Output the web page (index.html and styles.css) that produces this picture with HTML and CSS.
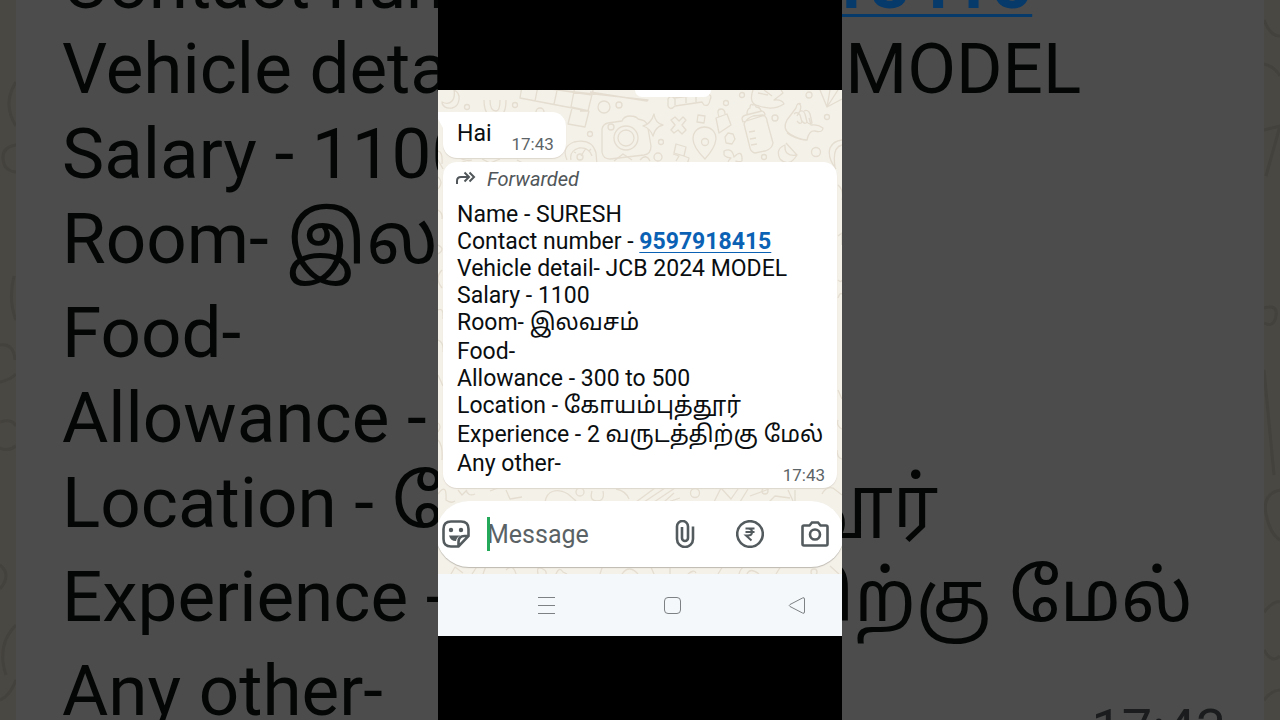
FILE: index.html
```html
<!DOCTYPE html>
<html lang="en">
<head>
<meta charset="utf-8">
<meta name="viewport" content="width=device-width, initial-scale=1">
<title>Chat</title>
<link rel="stylesheet" href="styles.css">
</head>
<body>
<div class="stage">
  <div class="backdrop" aria-hidden="true">
    <svg class="backdrop-doodles" viewBox="0 0 1280 720" preserveAspectRatio="none">
      <path d="M16 82q-14 22 0 44M16 145q-14 2-13 14t13 13M14 276q-6 24 2 44M0 345q14-2 15 15M0 382q10-2 16-8M0 422q12-4 16 4M0 448q8 4 16-2M0 565q12 10 0 24M16 625q-20 20-10 50M0 700q10-4 16-20"/>
      <path d="M1264 20q6 16 16 16M1264 64q10 2 16 12M1264 130l16-4-14 50M1264 308q14-4 12 8t-12 7M1264 370l10 105M1280 490q-18 4-14 24t14 26M1264 612q10-12 16-10M1264 650q8 14 16 6M1264 700q8-10 16-10"/>
    </svg>
    <div class="backdrop-bubble">
      <p class="line">Contact number - <span class="backdrop-link">9597918415</span></p>
      <p class="line">Vehicle detail- JCB 2024 MODEL</p>
      <p class="line">Salary - 1100</p>
      <p class="line tamil">Room- இலவசம்</p>
      <p class="line">Food-</p>
      <p class="line">Allowance - 300 to 500</p>
      <p class="line tamil">Location - கோயம்புத்தூர்</p>
      <p class="line tamil">Experience - 2 வருடத்திற்கு மேல்</p>
      <div class="last-row"><p class="line">Any other-</p><span class="backdrop-time">17:43</span></div>
    </div>
  </div>

  <div class="phone">
    <main class="chat">
      <svg class="doodles" viewBox="0 0 404 484" preserveAspectRatio="xMidYMin slice" aria-hidden="true">
        <path d="M4 12c8 4 14-2 12-12 8 4 6 16-2 18-6 1-10-2-10-6zM46 10c0 14 6 18 12 17 8-1 10-7 10-17M52 10c0 8 2 11 6 11 3 0 4-4 4-11"/>
        <circle cx="29" cy="17" r="2.500"/><circle cx="77" cy="15" r="2.500"/><circle cx="102" cy="22" r="4"/>
        <path d="M84 -4l-2 12 68 13M84 -4l126 14-1 1-57-9M100 -4l-3 15M120 -4l-4 18M137 -4l-4 21M156 -4l-6 25M150 21l-8 0M134 18l-4 16 17 3 4-16M133 17l18 4M120 0l34 5"/>
        <circle cx="166" cy="17" r="6"/><circle cx="181" cy="15" r="3"/><circle cx="152" cy="44" r="2.500"/>
        <path d="M164 39q1-5 6-6l14-2q2-5 8-5t8 3l4 1q5 1 6 8l3 18q0 8-7 9l-34 4q-7 0-8-7z"/>
        <circle cx="188" cy="48" r="12"/><circle cx="188" cy="48" r="8"/><circle cx="173" cy="37" r="3"/>
        <path class="covering" d="M216 24q1 9 9 11-8 2-10 11-3-8-10-10 8-2 11-12z"/>
        <path d="M230 9q2-4 6-1l26-3q-1-5 4-5l2 4q7 0 4 6-1 7-6 5l-2-3-27 4q-5 5-7 0zM237 8v7M248 6v7M258 5v7"/>
        <path d="M233 30l4-3 4 4 4-4 3 3-4 5 4 5-4 4-4-4-4 3-3-3 4-5zM260 25l7 1-1 7-7-1z"/>
        <path d="M278 28l11-4 4 11-12 8zM281 27q-3-8 2-8 4 0 4 5"/>
        <path d="M267 69q-12-12-12-20c0-16 23-16 23 0q-1 9-11 20z"/><circle cx="267" cy="52" r="3.500"/>
        <circle cx="223" cy="52" r="2.500"/><circle cx="220" cy="67" r="4"/><circle cx="288" cy="13" r="2.500"/><circle cx="304" cy="5" r="2.500"/>
        <path d="M238 54l10 3-2 9-10-3zM235 64l6 2-3 5M246 66l5 2-2 7"/>
        <path d="M290 43l5 1 2 5-3 5-6-1-1-6zM286 61q8-4 10 6 8-8 8 2 1 4-6 2 2 8-5 5-6-3 0-8-8-1-7-5z"/>
        <path d="M306 34q3-6 9-8l10-1q4 2 4 6l6 22q-1 6-8 8l-10 2q-4-1-5-5zM304 29q0-3 4-4l16-4q3 1 3 4l-22 7zM309 24q0-5 3-6 0-5 3-3 2-1 3 2 4 0 5 4M311 42l6-1M312 49l6-1M313 55l6-1"/>
        <path d="M315 0q-5 14 6 16 14 5 25-2-2-5-10-4l9-7-2-3M320 3l10 2M326 0l8 6"/>
        <path d="M363 14q-4-2-5 4l-9 12q-5 9 3 14 8 5 17 6 2-10 8-9 8 2 8-3-5-4-12-3l-2-7M361 14q3 1 1 7l-3 5M356 24q3-3 6 1l2 7q-2 3-5-1M361 22q4-3 6 2l2 8q-2 3-5-1M366 21q4-2 6 3l2 9q-3 2-5-1M349 43q8 6 18 7"/>
        <circle cx="337" cy="28" r="3"/><circle cx="389" cy="27" r="2.500"/><circle cx="371" cy="5" r="3"/><circle cx="378" cy="62" r="4.500"/><circle cx="326" cy="67" r="2.500"/>
        <path d="M348 53q10 11 11 12-8 13-17 4-5-10 5-14-1 12 12 10M382 0l7 17 15-8M389 17l3-17M389 17l11-17M398 79q-9-12-6-21 3-7 12-8M404 55q-10 2-7 22M129 70q-6-13 7-18 18-4 22 11l1 12M133 70q-2-9 8-12 10-1 13 8M143 66l5-8M136 62l2 1M151 61l2-2"/>
        <circle cx="142" cy="67" r="3"/><circle cx="26" cy="75" r="3"/><path d="M0 61q5 1 4 13M0 70l5 9M18 66q10 6 16 4M44 69l8 4 10-4M79 70q8 5 12 3M176 71l9-7 9 6M202 70q6-7 10 1"/>
        <path d="M0 87q6 5 0 12M0 120q5 3 4 9M0 155q8 4 0 9M4 180q-8 8 0 18M0 220q6-3 5 9M0 250q6 2 5 12M0 285l5 11M0 333q4 3 0 9M0 350q5 5 4 20"/>
        <path d="M400 95q6 5 4 15M400 146l4-3v12M400 190q3 3 4 0M400 208q2-6 4-4M400 300l4 9M400 330q-2 6 4 9M399 360q0 8 5 9"/>
        <path d="M0 404q9-12 8 6 5 4 9 1M20 400l4 5 5-5M28 400q2 7 9 4M52 401l8-3M68 400l4 9 12-2M107 412c2-12 12-14 23-8l8 7M154 401q-3 10 5 10t6-10M178 399q10 2 13 10M198 412l19-14M206 412l21-14M216 412l21-14M226 412l10-9M230 412l12-4"/>
        <circle cx="142" cy="402" r="4"/><circle cx="257" cy="403" r="4.500"/><circle cx="327" cy="401" r="3"/>
        <path d="M276 412l7-14 10 11 7-10M302 412l8-13M312 406l19-7M331 412l6-6 15 2M350 400l5 11M357 400v11M384 404q4-8 11-6l9 7"/>
        <path d="M13 484l4-7 8 6M34 484l8-12M45 484l3-8M68 480q7-7 10 4M100 484q-2-9 5-5 4 2 3 5M118 484q3-8 7-2l4 2M150 475h15l-3 9M184 484q7-10 16 0M216 484l-4-9M232 476v8M250 484q6-5 8-1M280 484l5-8M301 484q3-10 10-8l9 1M309 484q3-7 12 0M338 484l5-8M392 476l9 8"/><circle cx="376" cy="482" r="3"/>
      </svg>
      <div class="date-chip"></div>
      <section class="messages" aria-label="Messages">
        <article class="bubble short">
          <svg class="tail" viewBox="0 0 14 18" aria-hidden="true"><path d="M14 0H3Q-1 0 1 3L9 18h5z"/></svg>
          <p class="line">Hai</p>
          <time class="time">17:43</time>
        </article>
        <article class="bubble long">
          <p class="forwarded">
            <svg class="forward-icon" viewBox="0 0 20 16" aria-hidden="true"><path d="M1 13V10Q1 6 5 6H12M8.500 1.500L13 6l-4.500 4.500M13.500 1.500L18 6l-4.500 4.500"/></svg>
            <span>Forwarded</span>
          </p>
          <p class="line">Name - SURESH</p>
          <p class="line">Contact number - <a class="phone-link" href="tel:9597918415">9597918415</a></p>
          <p class="line">Vehicle detail- JCB 2024 MODEL</p>
          <p class="line">Salary - 1100</p>
          <p class="line tamil">Room- இலவசம்</p>
          <p class="line">Food-</p>
          <p class="line">Allowance - 300 to 500</p>
          <p class="line tamil">Location - கோயம்புத்தூர்</p>
          <p class="line tamil">Experience - 2 வருடத்திற்கு மேல்</p>
          <div class="last-row"><p class="line">Any other-</p><time class="time">17:43</time></div>
        </article>
      </section>
      <form class="composer">
        <button class="icon-button" type="button" aria-label="Stickers">
          <svg class="icon" viewBox="0 0 28 28"><path d="M9 1.500h10q7.500 0 7.500 7.500v7L16.500 26.500H9Q1.500 26.500 1.500 19V9Q1.500 1.500 9 1.500zM16.500 26.500V22q0-6 6-6h4"/><path class="solid" d="M7 15.500h11.500q-4 1.500-4.500 5.500-5.500 0-7-5.500z"/><circle class="solid" cx="9" cy="10" r="2.200"/><circle class="solid" cx="19" cy="10" r="2.200"/></svg>
        </button>
        <div class="field">
          <span class="caret"></span>
          <input class="message-input" type="text" placeholder="Message" aria-label="Message">
        </div>
        <button class="icon-button" type="button" aria-label="Attach">
          <svg class="icon" viewBox="0 0 28 28"><path d="M22 6.500V19a8 8 0 0 1-16 0V6.500a5.500 5.500 0 0 1 11 0V18a3 3 0 0 1-6 0V7"/></svg>
        </button>
        <button class="icon-button" type="button" aria-label="Payment">
          <svg class="icon" viewBox="0 0 28 28"><circle cx="14" cy="14" r="12.800"/><path class="thin" d="M9.500 8.500h9M9.500 12h9M9.500 8.500H12q4 0 4 3.500t-4 3.500h-2l5.500 5"/></svg>
        </button>
        <button class="icon-button" type="button" aria-label="Camera">
          <svg class="icon" viewBox="0 0 28 28"><path d="M3 5.500h5.500L11 2.500h6l2.500 3H25q1.500 0 1.500 1.500v17q0 1.500-1.500 1.500H3q-1.500 0-1.500-1.500V7q0-1.500 1.500-1.500z"/><circle cx="14" cy="14.500" r="5"/></svg>
        </button>
      </form>
    </main>
    <nav class="system-nav" aria-label="System">
      <button class="nav-button" type="button" aria-label="Recent apps"><svg class="nav-icon" viewBox="0 0 24 24"><path d="M4 4.500h17M4 12.500h17M4 20.500h17"/></svg></button>
      <button class="nav-button" type="button" aria-label="Home"><svg class="nav-icon" viewBox="0 0 24 24"><rect x="4.500" y="4.500" width="16" height="16" rx="3.500"/></svg></button>
      <button class="nav-button" type="button" aria-label="Back"><svg class="nav-icon" viewBox="0 0 24 24"><path d="M19.500 6v13q0 2-2 1L5 13.500q-1.500-1 0-2L17.500 5q2-1 2 1z"/></svg></button>
    </nav>
  </div>
</div>
</body>
</html>
```
FILE: styles.css
```css
* { box-sizing: border-box; }

body {
  margin: 0;
  background: #000;
  color: #0a0e10;
  font-family: Roboto, "Noto Sans Tamil", "Noto Sans", sans-serif;
}

p { margin: 0; }

button {
  padding: 0;
  border: 0;
  background: none;
}

.stage {
  position: relative;
  display: flex;
  justify-content: center;
  min-height: 100vh;
  overflow: hidden;
}

/* Dimmed enlarged copy of the conversation behind the phone */
.backdrop {
  position: absolute;
  inset: 0;
  padding: 0 16px;
  overflow: hidden;
  background: #4a4843;
}

.backdrop-doodles {
  position: absolute;
  inset: 0;
  width: 100%;
  height: 100%;
  fill: none;
  stroke: #44423c;
  stroke-width: 3;
}

.backdrop-bubble {
  position: relative;
  min-height: 100%;
  margin-top: -59px;
  padding: 0 38px 0 46px;
  background: #4c4c4c;
  color: #040606;
  font-size: 71px;
  line-height: 85px;
  white-space: nowrap;
}

.backdrop-bubble .tamil { height: 94px; }

.backdrop-link {
  color: #053a6b;
  font-weight: 700;
  text-decoration: underline;
  text-decoration-thickness: 3px;
  text-underline-offset: 6px;
}

.backdrop-time {
  color: #1a1c1d;
  font-size: 54px;
  line-height: 64px;
}

.last-row {
  display: flex;
  align-items: flex-end;
  justify-content: space-between;
}

.backdrop-bubble .last-row { margin-bottom: -40px; }
.backdrop-bubble .backdrop-time { margin-bottom: -20px; }

.phone {
  position: relative;
  width: 404px;
  max-width: 100%;
  padding-top: 90px;
  overflow: hidden;
  background: #000;
}

.chat {
  position: relative;
  display: flex;
  flex-direction: column;
  padding-bottom: 7px;
  overflow: hidden;
  background: #f4f1e9;
}

.doodles {
  position: absolute;
  inset: 0;
  width: 100%;
  height: 100%;
  fill: none;
  stroke: #e4ddd0;
  stroke-width: 1.300;
  stroke-linejoin: round;
}

.doodles .covering { fill: #f4f1e9; }

.date-chip {
  position: relative;
  align-self: center;
  width: 76px;
  height: 7px;
  margin-left: 66px;
  border-radius: 0 0 12px 12px;
  background: #fff;
}

.messages {
  display: flex;
  flex-direction: column;
  align-items: flex-start;
  gap: 4px;
  padding: 15px 5px 0;
}

.bubble {
  position: relative;
  border-radius: 14px;
  background: #fff;
  box-shadow: 0 1px 1px #ddd7cc;
  font-size: 23px;
  line-height: 27px;
}

.short {
  display: flex;
  align-items: flex-end;
  gap: 20px;
  padding: 8px 12px 4px 14px;
  border-top-left-radius: 0;
}

.short .line { padding-bottom: 7px; }

.tail {
  position: absolute;
  top: 0;
  left: -8px;
  width: 14px;
  height: 18px;
  fill: #fff;
}

.long {
  align-self: stretch;
  padding: 4px 12px 3px 14px;
}

.long .tamil { height: 29px; }

.forwarded {
  display: flex;
  align-items: center;
  gap: 11px;
  padding-bottom: 9px;
  color: #505659;
  font-size: 20px;
  font-style: italic;
  line-height: 26px;
}

.forward-icon {
  width: 20px;
  height: 16px;
  margin-left: -1px;
  fill: none;
  stroke: currentColor;
  stroke-width: 2;
}

.phone-link {
  color: #0b62b5;
  font-weight: 700;
  text-decoration-thickness: 1px;
  text-underline-offset: 3px;
}

.time {
  color: #5d6467;
  font-size: 17px;
  line-height: 20px;
}

.last-row .line { padding-bottom: 8px; }

.composer {
  position: relative;
  display: flex;
  align-items: center;
  gap: 37px;
  margin: 13px -2px 0;
  padding: 16px 15px 16px 6px;
  border-radius: 33px;
  background: #fff;
  box-shadow: 0 1px 1px #bdb9b1;
}

.icon-button {
  flex: none;
  width: 28px;
  height: 28px;
}

.icon {
  display: block;
  width: 28px;
  height: 28px;
  fill: none;
  stroke: #545b5e;
  stroke-width: 2.600;
}

.icon .solid { fill: #545b5e; stroke: none; }
.icon .thin { stroke-width: 2; }

.field {
  position: relative;
  flex: 1;
  min-width: 0;
  margin-left: -20px;
}

.caret {
  position: absolute;
  top: 0;
  left: 0;
  width: 3px;
  height: 34px;
  background: #24a85a;
}

.message-input {
  display: block;
  width: 100%;
  height: 34px;
  padding: 0;
  border: 0;
  outline: 0;
  background: none;
  color: #0a0e10;
  font: 25px Roboto, sans-serif;
}

.message-input::placeholder { color: #5b6265; opacity: 1; }

.system-nav {
  display: flex;
  align-items: center;
  justify-content: space-between;
  height: 62px;
  padding: 0 33px 0 96px;
  background: #f4f8fa;
}

.nav-button {
  width: 24px;
  height: 24px;
}

.nav-icon {
  display: block;
  width: 24px;
  height: 24px;
  fill: none;
  stroke: #7d8183;
  stroke-width: 1;
}
```
